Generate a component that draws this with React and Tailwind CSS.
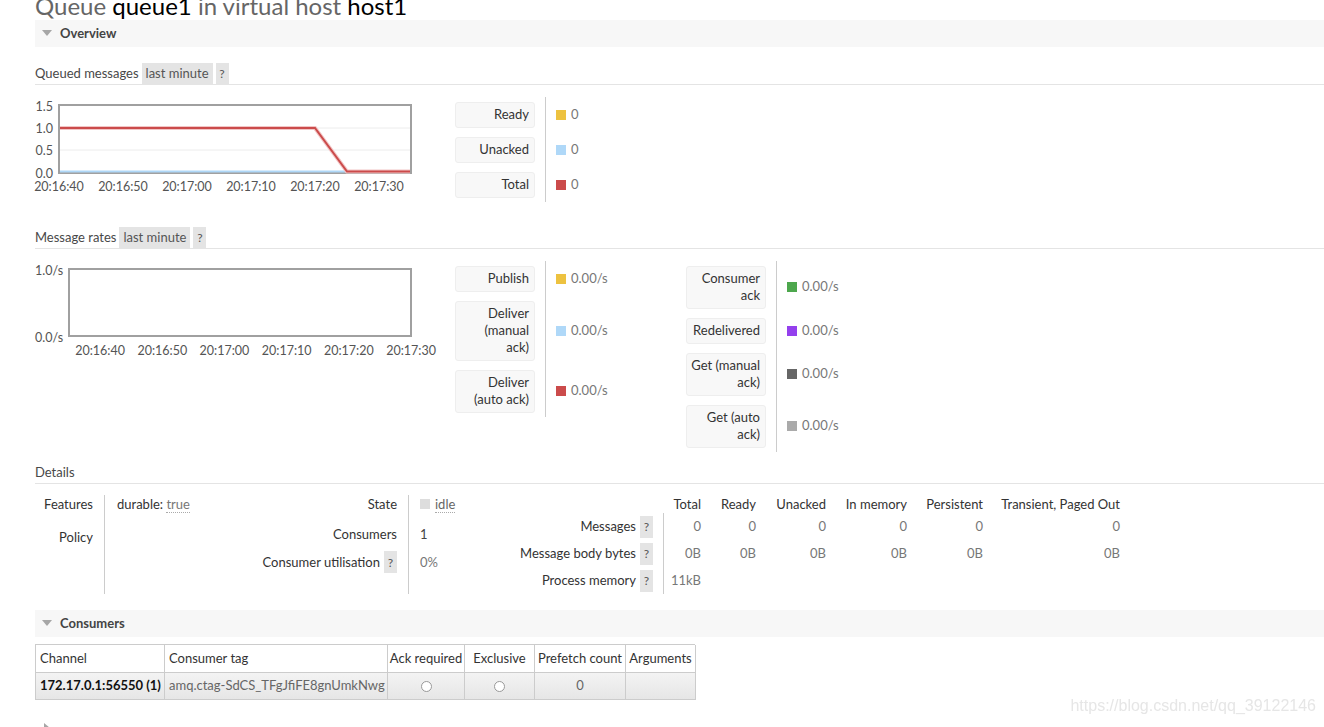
import React from "react";

const SW = {
  yellow: "bg-[#edc240]",
  blue: "bg-[#afd8f8]",
  red: "bg-[#cb4b4b]",
  green: "bg-[#4da74d]",
  purple: "bg-[#9440ed]",
  dark: "bg-[#666666]",
  grey: "bg-[#aaaaaa]",
};

function Triangle({ down = true }) {
  return down ? (
    <svg width="10" height="7" viewBox="0 0 10 7" className="mr-[8px]">
      <polygon points="0,0 10,0 5,6" fill="#a6a6a6" />
    </svg>
  ) : (
    <svg width="7" height="10" viewBox="0 0 7 10">
      <polygon points="0,0 6,5 0,10" fill="#a6a6a6" />
    </svg>
  );
}

function SectionBar({ title }) {
  return (
    <div className="flex h-[27px] items-center bg-[#f7f7f7] pl-[7px] text-[13px] font-bold text-[#444]">
      <Triangle />
      {title}
    </div>
  );
}

function Help() {
  return (
    <span className="ml-[4px] inline-flex h-[22px] w-[13px] items-center justify-center bg-[#e4e4e4] text-[12px] text-[#555]">
      ?
    </span>
  );
}

function SubHeader({ title, tags }) {
  return (
    <div className="flex h-[22px] items-stretch border-b border-[#e4e4e4] text-[13px] text-[#484848]">
      <span className="self-center">{title}</span>
      {tags && (
        <>
          <span className="ml-[3px] flex items-center bg-[#e4e4e4] px-[4px] text-[#555]">last minute</span>
          <span className="ml-[3px] flex w-[13px] items-center justify-center bg-[#e4e4e4] text-[12px] text-[#555]">?</span>
        </>
      )}
    </div>
  );
}

function Legend({ items, className = "" }) {
  return (
    <div className={`flex flex-col ${className}`}>
      {items.map((it) => (
        <div key={it.label.join(" ")} className="flex items-stretch">
          <div className="w-[80px] py-[4.5px]">
            <div className="rounded-[3px] border border-[#eeeeee] bg-[#f8f8f8] py-[3.5px] pr-[5px] text-right text-[13px] leading-[17px] text-[#333]">
              {it.label.map((l, i) => (
                <div key={i}>{l}</div>
              ))}
            </div>
          </div>
          <div className="ml-[10px] flex items-center border-l border-[#cccccc] pl-[10px] text-[13px] text-[#777]">
            <span className={`mr-[5px] h-[10px] w-[10px] ${it.color}`} />
            {it.value}
          </div>
        </div>
      ))}
    </div>
  );
}

function QueuedChart() {
  const xs = ["20:16:40", "20:16:50", "20:17:00", "20:17:10", "20:17:20", "20:17:30"];
  const ys = [
    ["1.5", "top-[3px]"],
    ["1.0", "top-[25px]"],
    ["0.5", "top-[47px]"],
    ["0.0", "top-[70px]"],
  ];
  return (
    <div className="relative h-[105px] w-[420px] shrink-0 text-[12.5px] leading-[13px] text-[#545454]">
      {ys.map(([t, c]) => (
        <span key={t} className={`absolute left-0 w-[18px] text-right ${c}`}>
          {t}
        </span>
      ))}
      <div className="absolute left-[23px] top-[7px] h-[70px] w-[354px] border-2 border-[#a0a0a0]">
        <svg width="350" height="66" viewBox="0 0 350 66" className="block overflow-visible">
          <line x1="0" y1="22" x2="350" y2="22" stroke="#ececec" strokeWidth="1" />
          <line x1="0" y1="44" x2="350" y2="44" stroke="#ececec" strokeWidth="1" />
          <polyline points="0,65.5 287,65.5" fill="none" stroke="#afd8f8" strokeWidth="2" />
          <polyline points="0,22 255,22 287,65.5 350,65.5" fill="none" stroke="#f2c6c6" strokeWidth="4" />
          <polyline points="0,22 255,22 287,65.5 350,65.5" fill="none" stroke="#cb4b4b" strokeWidth="2" />
        </svg>
      </div>
      <div className="absolute left-[-8px] top-[83px] flex">
        {xs.map((t) => (
          <span key={t} className="w-[64px] text-center">
            {t}
          </span>
        ))}
      </div>
    </div>
  );
}

function RatesChart() {
  const xs = ["20:16:40", "20:16:50", "20:17:00", "20:17:10", "20:17:20", "20:17:30"];
  return (
    <div className="relative h-[156px] w-[420px] shrink-0 text-[12.5px] leading-[13px] text-[#545454]">
      <span className="absolute left-0 top-[3px] w-[28px] text-right">1.0/s</span>
      <span className="absolute left-0 top-[70px] w-[28px] text-right">0.0/s</span>
      <div className="absolute left-[33px] top-[7px] h-[69px] w-[344px] border-2 border-[#a0a0a0]" />
      <div className="absolute left-[34px] top-[83px] flex">
        {xs.map((t) => (
          <span key={t} className="w-[62.2px] text-center">
            {t}
          </span>
        ))}
      </div>
    </div>
  );
}

function Details() {
  const cols = ["Total", "Ready", "Unacked", "In memory", "Persistent", "Transient, Paged Out"];
  const rows = [
    ["Messages", ["0", "0", "0", "0", "0", "0"]],
    ["Message body bytes", ["0B", "0B", "0B", "0B", "0B", "0B"]],
    ["Process memory", ["11kB", "", "", "", "", ""]],
  ];
  return (
    <div className="mt-[11px] flex text-[13px] leading-[17px]">
      {/* features / policy */}
      <div className="flex w-[220px] shrink-0">
        <div className="w-[70px] border-r border-[#cccccc] pr-[11px] text-right text-[#333]">
          <div className="h-[26px] pt-[1px]">Features</div>
          <div className="flex h-[33px] items-center justify-end">Policy</div>
        </div>
        <div className="pl-[12px]">
          <div className="h-[26px] pt-[1px] text-[#333]">
            durable: <span className="border-b border-dotted border-[#aaaaaa] text-[#777]">true</span>
          </div>
        </div>
      </div>

      {/* state */}
      <div className="flex w-[255px] shrink-0">
        <div className="w-[154px] border-r border-[#cccccc] pr-[11px] text-right text-[#333]">
          <div className="h-[26px] pt-[1px]">State</div>
          <div className="flex h-[27px] items-center justify-end">Consumers</div>
          <div className="flex h-[40px] items-start justify-end pt-[3px]">
            <span className="leading-[22px]">Consumer utilisation</span>
            <Help />
          </div>
        </div>
        <div className="pl-[11px]">
          <div className="flex h-[26px] items-start pt-[1px]">
            <span className="mr-[5px] mt-[3px] h-[10px] w-[10px] bg-[#dddddd]" />
            <span className="border-b border-dotted border-[#aaaaaa] leading-[16px] text-[#666]">idle</span>
          </div>
          <div className="flex h-[27px] items-center text-[#444]">1</div>
          <div className="h-[40px] pt-[3px] leading-[22px] text-[#777]">0%</div>
        </div>
      </div>

      {/* counts */}
      <div className="grid shrink-0 grid-cols-[154px_47px_55px_70px_81px_76px_137px]">
        <div className="h-[18px]" />
        {cols.map((c) => (
          <div key={c} className="h-[18px] whitespace-nowrap pr-[10px] pt-[1px] text-right text-[#333]">
            {c}
          </div>
        ))}
        {rows.map(([label, vals]) => (
          <React.Fragment key={label}>
            <div className="flex h-[27px] items-center justify-end border-r border-[#cccccc] pr-[10px] text-[#333]">
              <span className="whitespace-nowrap">{label}</span>
              <Help />
            </div>
            {vals.map((v, i) => (
              <div key={i} className="flex h-[27px] items-center justify-end pr-[10px] text-[#777]">
                {v}
              </div>
            ))}
          </React.Fragment>
        ))}
      </div>
    </div>
  );
}

function Radio() {
  return <span className="inline-block h-[11px] w-[11px] rounded-full border border-[#999] bg-white" />;
}

function ConsumersTable() {
  const cell = "border-r border-b border-[#cccccc] px-[4px] flex items-center whitespace-nowrap overflow-hidden";
  const row = "h-[27px] bg-linear-to-b from-[#f3f3f3] to-[#e6e6e6]";
  return (
    <div className="mt-[7px] grid w-[660px] grid-cols-[129px_223px_77px_70px_91px_70px] border-l border-t border-[#cccccc] text-[13px] text-[#333]">
      <div className={`${cell} h-[28px]`}>Channel</div>
      <div className={`${cell} h-[28px]`}>Consumer tag</div>
      <div className={`${cell} h-[28px] justify-center`}>Ack required</div>
      <div className={`${cell} h-[28px] justify-center`}>Exclusive</div>
      <div className={`${cell} h-[28px] justify-center`}>Prefetch count</div>
      <div className={`${cell} h-[28px] justify-center`}>Arguments</div>
      <div className={`${cell} ${row} font-bold text-[#111]`}>172.17.0.1:56550 (1)</div>
      <div className={`${cell} ${row} text-[#666]`}>amq.ctag-SdCS_TFgJfiFE8gnUmkNwg</div>
      <div className={`${cell} ${row} justify-center`}>
        <Radio />
      </div>
      <div className={`${cell} ${row} justify-center`}>
        <Radio />
      </div>
      <div className={`${cell} ${row} justify-center text-[#666]`}>0</div>
      <div className={`${cell} ${row}`} />
    </div>
  );
}

export default function App() {
  return (
    <div className="min-h-[727px] overflow-hidden bg-white pl-[35px] font-[Lato,sans-serif] text-[#333]">
      <h1 className="-mt-[8px] h-[28px] whitespace-nowrap text-[24px] font-normal leading-[28px] text-[#666]">
        Queue <span className="text-black">queue1</span> in virtual host <span className="text-black">host1</span>
      </h1>

      <SectionBar title="Overview" />

      <div className="mt-[16px]">
        <SubHeader title="Queued messages" tags />
      </div>
      <div className="mt-[12px] flex">
        <QueuedChart />
        <Legend
          items={[
            { label: ["Ready"], value: "0", color: SW.yellow },
            { label: ["Unacked"], value: "0", color: SW.blue },
            { label: ["Total"], value: "0", color: SW.red },
          ]}
        />
      </div>

      <div className="mt-[25px]">
        <SubHeader title="Message rates" tags />
      </div>
      <div className="mt-[12px] flex items-start">
        <RatesChart />
        <Legend
          className="w-[231px] shrink-0"
          items={[
            { label: ["Publish"], value: "0.00/s", color: SW.yellow },
            { label: ["Deliver", "(manual", "ack)"], value: "0.00/s", color: SW.blue },
            { label: ["Deliver", "(auto ack)"], value: "0.00/s", color: SW.red },
          ]}
        />
        <Legend
          items={[
            { label: ["Consumer", "ack"], value: "0.00/s", color: SW.green },
            { label: ["Redelivered"], value: "0.00/s", color: SW.purple },
            { label: ["Get (manual", "ack)"], value: "0.00/s", color: SW.dark },
            { label: ["Get (auto", "ack)"], value: "0.00/s", color: SW.grey },
          ]}
        />
      </div>

      <div className="mt-[10px]">
        <SubHeader title="Details" />
      </div>
      <Details />

      <div className="mt-[16px]">
        <SectionBar title="Consumers" />
      </div>
      <ConsumersTable />

      <div className="mt-[23px] pl-[9px]">
        <Triangle down={false} />
      </div>

      <div className="fixed bottom-[9px] right-[8px] font-['Liberation_Sans',Arial,sans-serif] text-[16px] text-[#e6e6e6]">
        https://blog.csdn.net/qq_39122146
      </div>
    </div>
  );
}
